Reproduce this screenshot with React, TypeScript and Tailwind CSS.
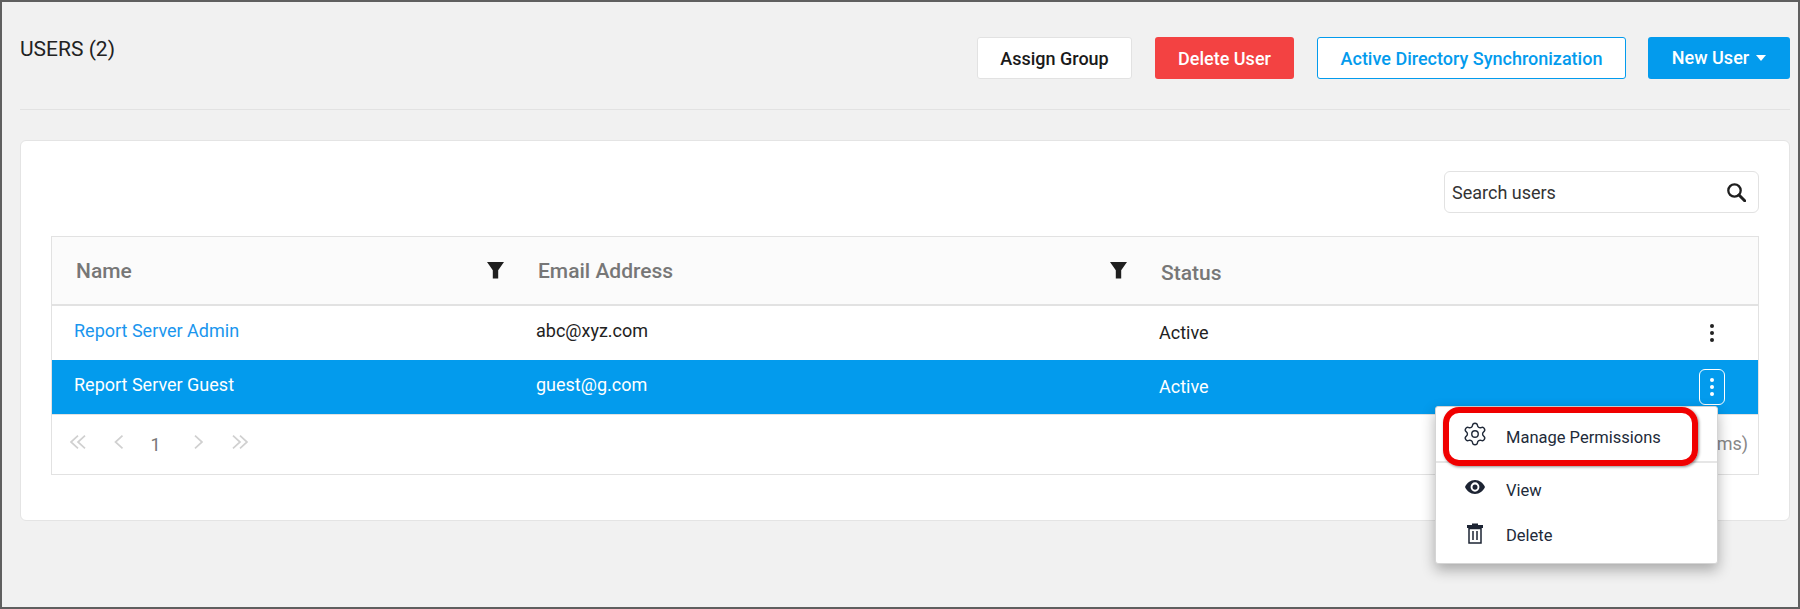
import { Settings } from "lucide-react";

function Funnel() {
  return (
    <svg width="17" height="17" viewBox="0 0 17 17" className="shrink-0">
      <path d="M0 0h17L11.200 8.200V16.500H5.800V8.200z" fill="#1f1f1f" />
    </svg>
  );
}

function Chevron({ dir, double }: { dir: "left" | "right"; double?: boolean }) {
  const single = dir === "left" ? "M8.500 0.700L1.500 7l7 6.300" : "M1 0.700L8 7l-7 6.300";
  const twin = dir === "left"
    ? "M8 0.700L1 7l7 6.300M15 0.700L8 7l7 6.300"
    : "M1 0.700L8 7l-7 6.300M8 0.700L15 7l-7 6.300";
  return (
    <svg width={double ? 16 : 9.5} height="14" viewBox={double ? "0 0 16 14" : "0 0 9.500 14"} fill="none" stroke="#d0d0d0" strokeWidth="1.700">
      <path d={double ? twin : single} />
    </svg>
  );
}

function Kebab({ color, boxed }: { color: string; boxed?: boolean }) {
  return (
    <div className={`w-[26px] h-[36px] rounded-[6px] flex flex-col items-center justify-center gap-[2.500px] ${boxed ? "border border-white" : ""}`}>
      <span className={`w-[4.500px] h-[4.500px] rounded-full ${color}`} />
      <span className={`w-[4.500px] h-[4.500px] rounded-full ${color}`} />
      <span className={`w-[4.500px] h-[4.500px] rounded-full ${color}`} />
    </div>
  );
}

function Row({ name, email, active }: { name: string; email: string; active?: boolean }) {
  return (
    <div className={`grid grid-cols-[461px_623px_1fr] h-[54px] items-center text-[18px] ${active ? "bg-[#039bed] text-white" : "bg-white text-[#222222]"}`}>
      <div className={`pl-[22px] pb-[6px] ${active ? "" : "text-[#1a96ee]"}`}>{name}</div>
      <div className="pl-[23px] pb-[6px]">{email}</div>
      <div className="pl-[23px] pr-[33px] flex items-center justify-between">
        <span className="-mt-[2px]">Active</span>
        <Kebab color={active ? "bg-white" : "bg-[#222222]"} boxed={active} />
      </div>
    </div>
  );
}

export default function App() {
  return (
    <div className="relative w-[1800px] h-[609px] overflow-hidden bg-[#f1f1f1] border-2 border-[#5f5f5f] font-['Roboto',sans-serif] text-[#222222]">
      <div className="pl-[18px] pr-[8px]">
        <header className="flex justify-between h-[108px] border-b border-[#e2e2e2]">
          <h1 className="text-[21px] leading-[24px] pt-[35px] font-normal">USERS (2)</h1>
          <div className="flex items-start gap-[23px] pt-[35px]">
            <button className="w-[155px] h-[42px] bg-white border border-[#e2e2e2] rounded-[3px] text-[18px] font-medium text-[#1a1a1a]">Assign Group</button>
            <button className="w-[139px] h-[42px] bg-[#f34242] rounded-[3px] text-[18px] font-medium text-white">Delete User</button>
            <button className="w-[309px] h-[42px] bg-white border border-[#039bed] rounded-[3px] text-[18px] font-medium text-[#039bed]">Active Directory Synchronization</button>
            <button className="w-[142px] h-[42px] -ml-[1px] bg-[#039bed] rounded-[3px] text-[18px] font-medium text-white flex items-center justify-center gap-[7px]">
              <span className="-mt-[2px]">New User</span>
              <span className="w-0 h-0 border-l-[5.5px] border-r-[5.5px] border-t-[6px] border-l-transparent border-r-transparent border-t-white" />
            </button>
          </div>
        </header>

        <main className="mt-[30px] h-[381px] bg-white border border-[#e4e4e4] rounded-[6px] px-[30px]">
          <div className="flex justify-end pt-[30px]">
            <div className="w-[315px] h-[42px] border border-[#e2e2e2] rounded-[6px] flex items-center justify-between pl-[7px] pr-[12px]">
              <span className="text-[18px] text-[#333333]">Search users</span>
              <svg width="19" height="19" viewBox="0 0 19 19" fill="none" stroke="#1f1f1f">
                <circle cx="7.500" cy="7.500" r="6.200" strokeWidth="2.300" />
                <path d="M12 12l5.700 5.700" strokeWidth="3" strokeLinecap="round" />
              </svg>
            </div>
          </div>

          <div className="mt-[23px] h-[239px] border border-[#e2e2e2]">
            <div className="grid grid-cols-[461px_623px_1fr] h-[69px] bg-[#fbfbfb] border-b-2 border-[#e2e2e2] text-[21px] leading-[27px] font-medium text-[#777777]">
              <div className="pl-[24px] pr-[9px] pt-[21px] flex justify-between items-start">
                <span>Name</span>
                <span className="mt-[4px]"><Funnel /></span>
              </div>
              <div className="pl-[25px] pr-[9px] pt-[21px] flex justify-between items-start">
                <span>Email Address</span>
                <span className="mt-[4px]"><Funnel /></span>
              </div>
              <div className="pl-[25px] pt-[23px]">Status</div>
            </div>
            <Row name="Report Server Admin" email="abc@xyz.com" />
            <Row name="Report Server Guest" email="guest@g.com" active />
            <div className="h-[59px] flex items-start justify-between pl-[18px] pr-[10px] pt-[20px] border-t border-[#e2e2e2] text-[#888888] text-[18px] leading-[24px]">
              <div className="flex items-start">
                <Chevron dir="left" double />
                <span className="ml-[28px]"><Chevron dir="left" /></span>
                <span className="ml-[27px] -mt-[2px] text-[#777777]">1</span>
                <span className="ml-[33px]"><Chevron dir="right" /></span>
                <span className="ml-[29px]"><Chevron dir="right" double /></span>
              </div>
              <span className="-mt-[3px]">(2 items)</span>
            </div>
          </div>
        </main>
      </div>

      <div className="absolute left-[1433px] top-[404px] w-[283px] h-[158px] bg-white rounded-[3px] border border-[#d5d5d5] shadow-[0_6px_14px_rgba(0,0,0,0.3)] text-[16.5px] text-[#222b3a]">
        <div className="h-[56px] flex items-center pl-[26px] border-b-2 border-[#e6e6e6]">
          <Settings size={26} strokeWidth={1.3} />
          <span className="ml-[18px] mt-[9px]">Manage Permissions</span>
        </div>
        <div className="h-[46px] flex items-center pl-[29px]">
          <svg width="20" height="14" viewBox="0 0 24 16" fill="#1d2433" className="mt-[2px]" preserveAspectRatio="none">
            <path fillRule="evenodd" d="M12 0C6.500 0 2.200 3.300 0 8c2.200 4.700 6.500 8 12 8s9.800-3.300 12-8c-2.200-4.700-6.500-8-12-8zm0 13.300A5.300 5.300 0 1 1 12 2.700a5.300 5.300 0 0 1 0 10.600z" />
            <circle cx="12" cy="8" r="3" />
          </svg>
          <span className="ml-[21px] mt-[11px]">View</span>
        </div>
        <div className="h-[44px] flex items-center pl-[31px]">
          <svg width="16" height="21" viewBox="0 0 16 21" fill="none" className="mt-[4px]">
            <path d="M5 0.500h6V2h5v3H0V2h5z" fill="#1d2433" />
            <path d="M2 5.500h12V20H2z" stroke="#1d2433" strokeWidth="1.500" />
            <path d="M6 8v9M10 8v9" stroke="#1d2433" strokeWidth="1.500" />
          </svg>
          <span className="ml-[23px] mt-[11px]">Delete</span>
        </div>
        <div className="absolute left-[7px] top-[0px] w-[255px] h-[59px] rounded-[16px] border-[6px] border-[#f00000] shadow-[1px_1px_3px_rgba(0,0,0,0.45)]" />
      </div>
    </div>
  );
}
